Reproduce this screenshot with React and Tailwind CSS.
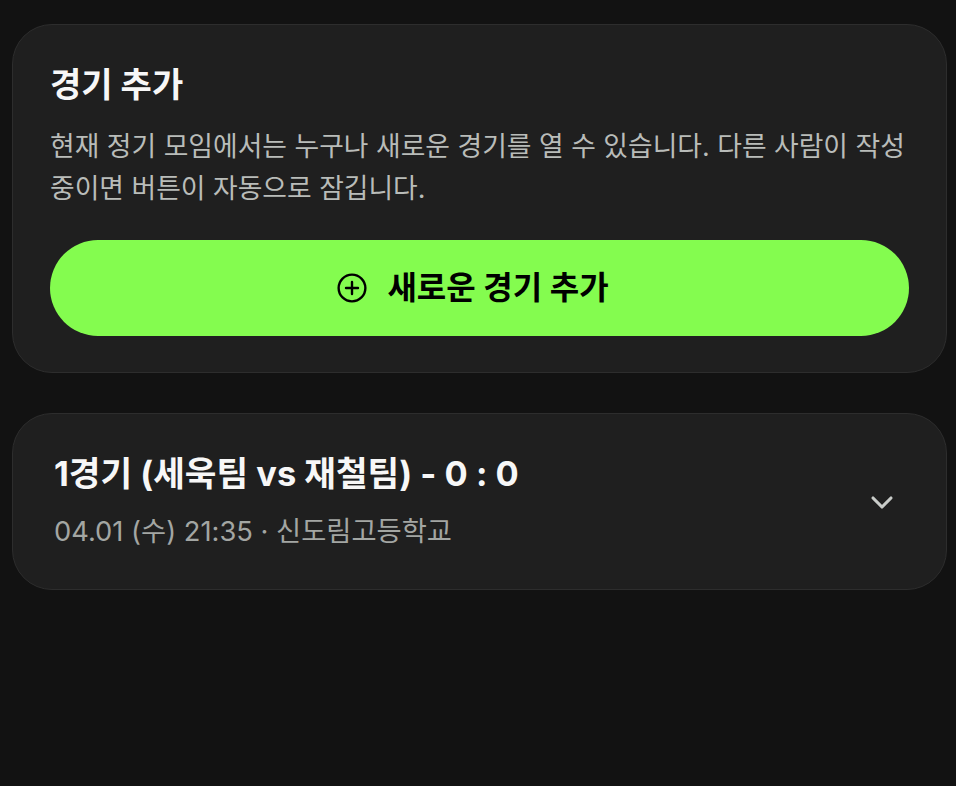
import React from "react";

const font = { fontFamily: '"Inter", "Noto Sans CJK KR", sans-serif' };

function PlusCircle() {
  return (
    <svg width="30" height="30" viewBox="0 0 24 24" fill="none" stroke="currentColor" strokeWidth="1.9" strokeLinecap="round">
      <circle cx="12" cy="12" r="10.7" />
      <line x1="7.2" y1="12" x2="16.8" y2="12" />
      <line x1="12" y1="7.2" x2="12" y2="16.8" />
    </svg>
  );
}

function Chevron() {
  return (
    <svg width="30" height="30" viewBox="0 0 24 24" fill="none" stroke="currentColor" strokeWidth="2.5" strokeLinecap="round" strokeLinejoin="round">
      <path d="M4.8 8.8L12 16l7.2-7.2" />
    </svg>
  );
}

export default function App() {
  return (
    <div className="min-h-[786px] w-full bg-[#121212] pl-3 pr-[9px] pt-6" style={font}>
      <div className="flex flex-col gap-10">
        <section className="rounded-[40px] border border-[#2d2d2d] bg-[#1f1f1f] px-[37px] pt-[40px] pb-[36px]">
          <h2 className="text-[34px] font-bold leading-[40px] text-[#f7f7f7]">경기 추가</h2>
          <p className="mt-[20px] break-keep text-[26.8px] leading-[42px] text-[#b9bcb9]">
            현재 정기 모임에서는 누구나 새로운 경기를 열 수 있습니다. 다른 사람이 작성 중이면 버튼이 자동으로 잠깁니다.
          </p>
          <button className="mt-[31px] flex h-[96px] w-full items-center justify-center gap-[20px] rounded-full bg-[#84fc4f] pr-[13px] text-black">
            <PlusCircle />
            <span className="text-[32px] font-bold leading-none">새로운 경기 추가</span>
          </button>
        </section>

        <section className="flex items-center justify-between rounded-[40px] border border-[#2d2d2d] bg-[#1f1f1f] pl-[41px] pr-[49px] pt-[40px] pb-[39px]">
          <div className="flex flex-col">
            <h3 className="text-[34.4px] font-bold leading-[40px] text-[#f7f7f7]">1경기 (세욱팀 vs 재철팀) - 0 : 0</h3>
            <p className="mt-[20px] text-[27.3px] leading-[36px] text-[#a3a6a3]">04.01 (수) 21:35 · 신도림고등학교</p>
          </div>
          <div className="text-[#c9ccc9]">
            <Chevron />
          </div>
        </section>
      </div>
    </div>
  );
}
